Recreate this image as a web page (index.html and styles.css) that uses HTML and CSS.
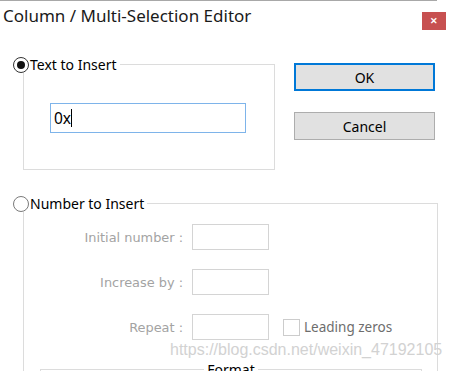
FILE: index.html
```html
<!DOCTYPE html>
<html lang="en">
<head>
    <meta charset="UTF-8">
    <meta name="viewport" content="width=device-width, initial-scale=1.0">
    <title>Column / Multi-Selection Editor</title>
    <link rel="stylesheet" href="styles.css">
</head>
<body>
    <div class="window">
        <div class="top-line"></div>
        <div class="titlebar">
            <span class="title">Column / Multi-Selection Editor</span>
            <button class="close-btn">&#x2715;</button>
        </div>

        <div class="top-row">
            <div class="group group-text">
                <div class="group-head">
                    <span class="radio checked"></span>
                    <span class="head-label">Text to Insert</span>
                </div>
                <div class="text-field">0x<span class="caret"></span></div>
            </div>
            <div class="actions">
                <button class="btn btn-default">OK</button>
                <button class="btn">Cancel</button>
            </div>
        </div>

        <div class="group group-number">
            <div class="group-head">
                <span class="radio"></span>
                <span class="head-label">Number to Insert</span>
            </div>
            <div class="num-rows">
                <label class="num-label">Initial number :</label>
                <div class="num-field"></div>
                <div></div>
                <label class="num-label">Increase by :</label>
                <div class="num-field"></div>
                <div></div>
                <label class="num-label">Repeat :</label>
                <div class="num-field"></div>
                <div class="check-wrap">
                    <span class="checkbox"></span>
                    <span class="check-label">Leading zeros</span>
                </div>
            </div>
            <div class="format-group">
                <span class="format-title">Format</span>
            </div>
        </div>

        <div class="watermark">https://blog.csdn.net/weixin_47192105</div>
    </div>
</body>
</html>
```

FILE: styles.css
```css
body {
    margin: 0;
    height: 371px;
    overflow: hidden;
    background-color: #fff;
    font-family: "Noto Sans", sans-serif;
    color: #000;
}
.window {
    position: relative;
    width: 450px;
    height: 371px;
    overflow: hidden;
}
.top-line {
    width: 437px;
    height: 1px;
    background-color: #a8a8a8;
}
.titlebar {
    display: flex;
    justify-content: space-between;
    align-items: flex-start;
    height: 40px;
    padding: 0 4px 0 3px;
}
.title {
    font-size: 17px;
    line-height: 30px;
    color: #1a1a1a;
}
.close-btn {
    margin-top: 11px;
    width: 24px;
    height: 18px;
    padding: 0;
    border: none;
    background-color: #c75050;
    color: #fff;
    font-size: 9px;
    font-weight: bold;
    line-height: 18px;
}
.top-row {
    display: flex;
    align-items: flex-start;
    margin-top: 23px;
}
.group {
    margin-left: 23px;
    border: 1px solid #dcdcdc;
}
.group-head {
    display: flex;
    align-items: center;
    width: fit-content;
    height: 16px;
    margin: -8px 0 0 -11px;
    padding-right: 3px;
    background-color: #fff;
}
.head-label {
    font-size: 14px;
    line-height: 16px;
    margin-left: 1px;
}
.radio {
    box-sizing: border-box;
    width: 16px;
    height: 16px;
    border: 1px solid #7a7a7a;
    border-radius: 50%;
    display: flex;
    align-items: center;
    justify-content: center;
}
.radio.checked {
    border-color: #333;
}
.radio.checked::after {
    content: "";
    width: 8px;
    height: 8px;
    border-radius: 50%;
    background-color: #111;
}
.group-text {
    box-sizing: border-box;
    width: 252px;
    height: 106px;
}
.text-field {
    box-sizing: border-box;
    display: flex;
    align-items: center;
    width: 196px;
    height: 30px;
    margin: 30px 0 0 26px;
    padding-left: 3px;
    border: 1px solid #7eb4ea;
    font-size: 15.5px;
}
.caret {
    width: 1px;
    height: 18px;
    background-color: #000;
}
.actions {
    display: flex;
    flex-direction: column;
    gap: 21px;
    margin: -1px 0 0 19px;
}
.btn {
    box-sizing: border-box;
    width: 141px;
    height: 28px;
    border: 1px solid #adadad;
    background-color: #e1e1e1;
    font-family: "Noto Sans", sans-serif;
    font-size: 14px;
    color: #000;
}
.btn-default {
    border: 2px solid #0078d7;
}
.group-number {
    margin-top: 33px;
    height: 200px;
    width: 413px;
}
.num-rows {
    display: grid;
    grid-template-columns: 159px 77px auto;
    column-gap: 9px;
    row-gap: 19px;
    align-items: center;
    margin-top: 12px;
}
.num-label {
    text-align: right;
    font-family: "DejaVu Sans", sans-serif;
    font-size: 12.9px;
    color: #a3a3a3;
}
.num-field {
    box-sizing: border-box;
    height: 26px;
    border: 1px solid #d4d4d4;
}
.check-wrap {
    display: flex;
    align-items: center;
    margin-left: 5px;
}
.checkbox {
    box-sizing: border-box;
    width: 17px;
    height: 17px;
    border: 1px solid #cccccc;
}
.check-label {
    margin-left: 4px;
    font-size: 13.5px;
    color: #6d6d6d;
}
.format-group {
    margin: 29px 0 0 16px;
    width: 380px;
    height: 40px;
    border: 1px solid #dcdcdc;
    text-align: center;
}
.format-title {
    display: inline-block;
    margin-top: -8px;
    padding: 0 3px;
    background-color: #fff;
    font-size: 14px;
    line-height: 16px;
    vertical-align: top;
}
.watermark {
    position: absolute;
    left: 170px;
    top: 341px;
    white-space: nowrap;
    font-family: "Liberation Sans", sans-serif;
    font-size: 16px;
    color: #d2d2d2;
}
```
